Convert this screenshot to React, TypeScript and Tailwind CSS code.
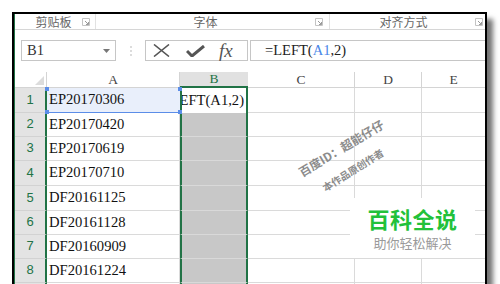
import React from "react";

const serif = "font-['Liberation_Serif','Noto_Sans_CJK_SC',serif]";
const cjk = "font-['Noto_Sans_CJK_SC','Noto_Sans',sans-serif]";

const rows = [
  { n: 1, a: "EP20170306", h: "h-[25px]" },
  { n: 2, a: "EP20170420", h: "h-[24px]" },
  { n: 3, a: "EP20170619", h: "h-[24px]" },
  { n: 4, a: "EP20170710", h: "h-[25px]" },
  { n: 5, a: "DF20161125", h: "h-[25px]" },
  { n: 6, a: "DF20161128", h: "h-[24px]" },
  { n: 7, a: "DF20160909", h: "h-[24px]" },
  { n: 8, a: "DF20161224", h: "h-[24px]" },
  { n: 9, a: "", h: "h-[24px]" },
];

function Launcher() {
  return (
    <svg width="8" height="8" viewBox="0 0 8 8" className="shrink-0">
      <path d="M0.5 0.5h7v7h-7z" fill="none" stroke="#c4c4c4" />
      <path d="M3 3l3.5 3.5M6.5 4v2.5H4" fill="none" stroke="#9a9a9a" />
    </svg>
  );
}

function Handle({ pos }: { pos: string }) {
  return <span className={`absolute h-[4px] w-[4px] bg-[#5b8de8] ${pos}`} />;
}

export default function App() {
  return (
    <div className="relative h-[284px] w-[500px] overflow-hidden bg-white pl-3 pt-3">
      <div className="h-[290px] w-[475px] border-x-2 border-t-2 border-black bg-white shadow-[6px_7px_5px_rgba(0,0,0,0.55)]">
        <div className="h-full border-l border-[#217346]">
          {/* ribbon group labels */}
          <div className={`flex h-[16px] border-b border-[#d6d6d6] text-[12px] leading-none text-[#666] ${cjk}`}>
            <div className="flex w-[81px] items-center border-r border-[#e2e2e2] pr-[5px]">
              <span className="flex-1 pl-[10px] text-center">剪贴板</span>
              <Launcher />
            </div>
            <div className="flex w-[234px] items-center border-r border-[#e2e2e2] pr-[6px]">
              <span className="flex-1 text-center">字体</span>
              <Launcher />
            </div>
            <div className="flex flex-1 items-center pr-[2px]">
              <span className="flex-1 pl-[2px] text-center">对齐方式</span>
              <Launcher />
            </div>
          </div>

          {/* formula bar */}
          <div className="flex h-[42px] items-start pl-[6px] pt-[10px]">
            <div className={`flex h-[21px] w-[95px] items-center justify-between border border-[#c6c6c6] pl-[5px] pr-[5px] text-[14.5px] text-[#333] ${serif}`}>
              <span>B1</span>
              <svg width="7" height="4" viewBox="0 0 7 4">
                <path d="M0 0h7L3.5 4z" fill="#777" />
              </svg>
            </div>
            <div className="flex h-[21px] w-[29px] items-center justify-center">
              <svg width="2" height="10" viewBox="0 0 2 10">
                <circle cx="1" cy="1" r="0.8" fill="#b0b0b0" />
                <circle cx="1" cy="5" r="0.8" fill="#b0b0b0" />
                <circle cx="1" cy="9" r="0.8" fill="#b0b0b0" />
              </svg>
            </div>
            <div className="flex h-[21px] w-[103px] items-center border border-[#c6c6c6] pl-[7px]">
              <svg width="17" height="13" viewBox="0 0 17 13" className="mr-[16px]">
                <path d="M1 0.5l15 12M16 0.5l-15 12" stroke="#555" strokeWidth="1.6" />
              </svg>
              <svg width="19" height="12" viewBox="0 0 19 12" className="mr-[14px]">
                <path d="M1 6l5 5L18 1" fill="none" stroke="#555" strokeWidth="3" />
              </svg>
              <span className="font-['Liberation_Serif',serif] text-[19px] italic leading-none text-[#555]">fx</span>
            </div>
            <div className={`ml-[2px] flex h-[21px] flex-1 items-center border-y border-l border-[#c6c6c6] pl-[14px] text-[14.5px] text-[#222] ${serif}`}>
              =LEFT(<span className="text-[#4a86e8]">A1</span>,2)
            </div>
          </div>

          {/* grid */}
          <div className="flex flex-col">
            <div className={`flex h-[16px] text-[13.5px] leading-none text-[#444] ${serif}`}>
              <div className="relative w-[32px] border-b border-r border-[#d4d4d4]">
                <svg width="9" height="9" viewBox="0 0 9 9" className="absolute bottom-[2px] right-[2px]">
                  <path d="M9 0v9H0z" fill="#dcdcdc" />
                </svg>
              </div>
              <div className="flex w-[133px] items-center justify-center border-b border-r border-[#d4d4d4]">A</div>
              <div className="flex w-[68px] items-center justify-center border-b-2 border-[#217346] bg-[#e1e1e1] text-[#217346]">B</div>
              <div className="flex w-[107px] items-center justify-center border-b border-r border-[#d4d4d4]">C</div>
              <div className="flex w-[67px] items-center justify-center border-b border-r border-[#d4d4d4]">D</div>
              <div className="flex flex-1 items-center justify-center border-b border-[#d4d4d4]">E</div>
            </div>
            {rows.map((r) => (
              <div key={r.n} className={`flex ${r.h} text-[14.6px] text-[#111] ${serif}`}>
                <div className="flex w-[32px] items-end justify-center border-b border-r-2 border-[#d2d2d2] border-r-[#217346] bg-[#e3e3e3] pb-[3px] font-['Liberation_Sans',sans-serif] text-[13px] text-[#217346]">
                  {r.n}
                </div>
                {r.n === 1 ? (
                  <div className="relative flex w-[133px] items-center border-b border-[#5b8de8] bg-[#e9effb] pl-[2px]">
                    {r.a}
                    <Handle pos="-left-[2px] -top-[1px]" />
                    <Handle pos="-right-[2px] -top-[1px]" />
                    <Handle pos="-left-[2px] -bottom-[2px]" />
                    <Handle pos="-right-[2px] -bottom-[2px]" />
                  </div>
                ) : (
                  <div className="flex w-[133px] items-center border-b border-r border-[#dadada] pl-[2px]">{r.a}</div>
                )}
                {r.n === 1 ? (
                  <div className="flex w-[68px] items-center justify-end overflow-hidden border-x-2 border-[#217346] bg-white pr-[2px]">
                    <span className="whitespace-nowrap">=LEFT(A1,2)</span>
                  </div>
                ) : (
                  <div className="w-[68px] border-x-2 border-b border-[#217346] border-b-[#d9d9d9] bg-[#c8c8c8]" />
                )}
                <div className="w-[107px] border-b border-r border-[#dadada]" />
                <div className="w-[67px] border-b border-r border-[#dadada]" />
                <div className="flex-1 border-b border-[#dadada]" />
              </div>
            ))}
          </div>
        </div>
      </div>

      {/* watermark */}
      <div className={`absolute left-[341px] top-[148px] -translate-x-1/2 -translate-y-1/2 rotate-[-31deg] whitespace-nowrap text-[12px] font-bold leading-none text-[#8c8c8c] ${cjk}`}>
        百度ID：超能仔仔
      </div>
      <div className={`absolute left-[353px] top-[170px] -translate-x-1/2 -translate-y-1/2 rotate-[-32deg] whitespace-nowrap text-[10px] font-bold leading-none text-[#8c8c8c] ${cjk}`}>
        本作品原创作者
      </div>

      {/* brand badge */}
      <div className={`absolute left-[350px] top-[198px] flex h-[60px] w-[125px] flex-col items-center justify-center bg-white ${cjk}`}>
        <span className="text-[22px] font-bold leading-none tracking-[0.5px] text-[#22c13a]">百科全说</span>
        <span className="mt-[7px] text-[13px] leading-none text-[#9a9a9a]">助你轻松解决</span>
      </div>
    </div>
  );
}
